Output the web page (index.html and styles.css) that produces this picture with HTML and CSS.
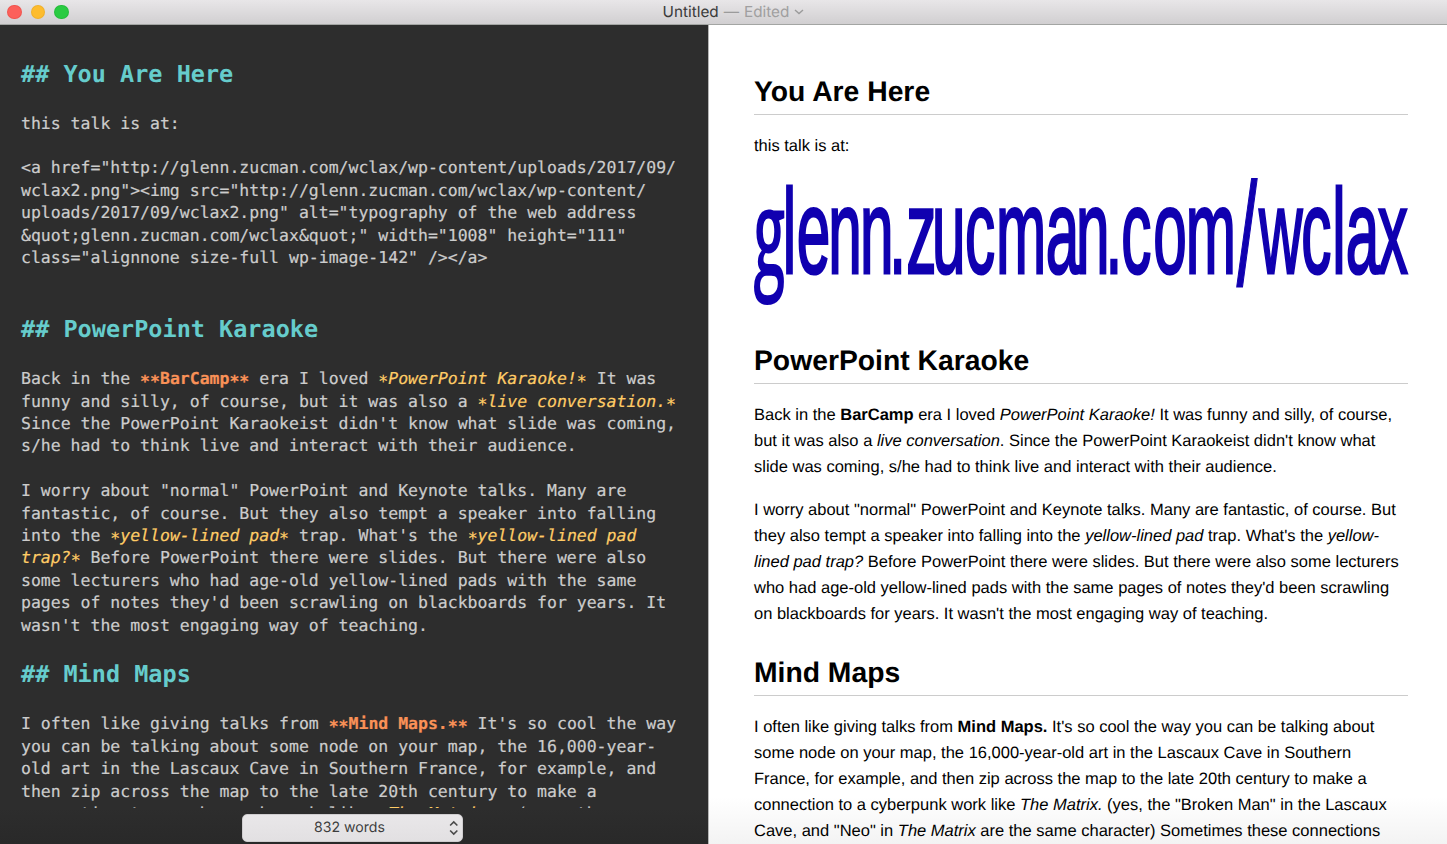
FILE: index.html
```
<!DOCTYPE html>
<html lang="en">
<head>
<meta charset="utf-8">
<title>Untitled</title>
<link rel="stylesheet" href="styles.css">
</head>
<body>
<div class="window">
<header class="titlebar">
  <div class="lights"><span class="light close"></span><span class="light minimize"></span><span class="light zoom"></span></div>
  <div class="title"><span class="name">Untitled</span><span class="dash">—</span><span class="edited">Edited</span><svg class="chevron" viewBox="0 0 10 6"><path d="M1 1l4 3.6L9 1"/></svg></div>
</header>
<div class="panes">
<section class="editor">
<div class="source">
<h2 class="src-head">## You Are Here</h2>
<p class="src">this talk is at:</p>
<p class="src">&lt;a href="http://glenn.zucman.com/wclax/wp-content/uploads/2017/09/
wclax2.png"&gt;&lt;img src="http://glenn.zucman.com/wclax/wp-content/
uploads/2017/09/wclax2.png" alt="typography of the web address
&amp;quot;glenn.zucman.com/wclax&amp;quot;" width="1008" height="111"
class="alignnone size-full wp-image-142" /&gt;&lt;/a&gt;</p>
<h2 class="src-head spaced">## PowerPoint Karaoke</h2>
<p class="src">Back in the <b><s>**</s>BarCamp<s>**</s></b> era I loved <i><s>*</s>PowerPoint Karaoke!<s>*</s></i> It was
funny and silly, of course, but it was also a <i><s>*</s>live conversation.<s>*</s></i>
Since the PowerPoint Karaokeist didn't know what slide was coming,
s/he had to think live and interact with their audience.</p>
<p class="src">I worry about "normal" PowerPoint and Keynote talks. Many are
fantastic, of course. But they also tempt a speaker into falling
into the <i><s>*</s>yellow-lined pad<s>*</s></i> trap. What's the <i><s>*</s>yellow-lined pad
trap?<s>*</s></i> Before PowerPoint there were slides. But there were also
some lecturers who had age-old yellow-lined pads with the same
pages of notes they'd been scrawling on blackboards for years. It
wasn't the most engaging way of teaching.</p>
<h2 class="src-head">## Mind Maps</h2>
<p class="src">I often like giving talks from <b><s>**</s>Mind Maps.<s>**</s></b> It's so cool the way
you can be talking about some node on your map, the 16,000-year-
old art in the Lascaux Cave in Southern France, for example, and
then zip across the map to the late 20th century to make a
connection to a cyberpunk work like <i><s>*</s>The Matrix.<s>*</s></i> (yes, the</p>
</div>
<footer class="status">
  <div class="counter"><span>832 words</span><svg class="stepper" viewBox="0 0 10 16"><path d="M1.2 5.4L5 1.6l3.8 3.8M1.2 10.6L5 14.4l3.8-3.8"/></svg></div>
</footer>
</section>
<article class="preview">
<h2>You Are Here</h2>
<p>this talk is at:</p>
<svg class="banner" viewBox="0 0 654 156">
  <text class="banner-g" transform="translate(-.5 117) scale(.44 .93)">g</text>
  <g transform="translate(0 113.5) scale(.475 .945)">
    <text class="banner-text" x="60.3 89.8 156.5 223.3 284.6 320.3 374.5 444 509.6 614.4 678 740 773.3 840.7 909">lenn.zucman.com</text>
    <text class="banner-slash" x="1016.2" y="13">/</text>
    <text class="banner-text" x="1063.2 1152.3 1217.4 1246 1313.4">wclax</text>
  </g>
</svg>
<h2>PowerPoint Karaoke</h2>
<p>Back in the <b>BarCamp</b> era I loved <i>PowerPoint Karaoke!</i> It was funny and silly, of course,<br>but it was also a <i>live conversation</i>. Since the PowerPoint Karaokeist didn't know what<br>slide was coming, s/he had to think live and interact with their audience.</p>
<p>I worry about "normal" PowerPoint and Keynote talks. Many are fantastic, of course. But<br>they also tempt a speaker into falling into the <i>yellow-lined pad</i> trap. What's the <i>yellow-<br>lined pad trap?</i> Before PowerPoint there were slides. But there were also some lecturers<br>who had age-old yellow-lined pads with the same pages of notes they'd been scrawling<br>on blackboards for years. It wasn't the most engaging way of teaching.</p>
<h2>Mind Maps</h2>
<p>I often like giving talks from <b>Mind Maps.</b> It's so cool the way you can be talking about<br>some node on your map, the 16,000-year-old art in the Lascaux Cave in Southern<br>France, for example, and then zip across the map to the late 20th century to make a<br>connection to a cyberpunk work like <i>The Matrix.</i> (yes, the "Broken Man" in the Lascaux<br>Cave, and "Neo" in <i>The Matrix</i> are the same character) Sometimes these connections</p>
</article>
</div>
</div>
</body>
</html>
```
FILE: styles.css
```
* { box-sizing: border-box; }
body { margin: 0; overflow: hidden; text-rendering: geometricPrecision; }
h2, p { margin: 0; }
.window { width: 1447px; height: 844px; display: flex; flex-direction: column; }

.titlebar {
  height: 25px; flex: none; display: grid; grid-template-columns: 1fr auto 1fr; align-items: center;
  background: linear-gradient(#e8e6e8, #d1cfd1); border-bottom: 1px solid #a3a5a3;
}
.lights { display: flex; gap: 9px; padding-left: 7px; }
.light { width: 14.5px; height: 14.5px; border-radius: 50%; border: 1px solid #e0443e66; }
.close { background: #fc605b; }
.minimize { background: #fdbc2e; border-color: #dfa12366; }
.zoom { background: #2acb42; border-color: #1ea83366; }
.title { display: flex; align-items: center; padding-left: 20px; font: 15.3px/24px Inter, sans-serif; color: #3a3a3a; }
.dash { margin: 0 5px 0 5px; color: #9b9b9b; }
.edited { color: #a09fa0; }
.chevron { width: 10px; height: 6px; margin-left: 5px; fill: none; stroke: #9b9b9b; stroke-width: 1.4; }

.panes { flex: 1; min-height: 0; display: grid; grid-template-columns: 709px 1fr; }
.editor {
  background: #2d2d2d; border-right: 1px solid #b5b5b5; min-height: 0;
  display: flex; flex-direction: column; font-family: "DejaVu Sans Mono", monospace;
}
.source { height: 783px; overflow: hidden; padding: 33.5px 0 0 21px; }
.src, .src-head { white-space: pre; }
.src { font-size: 16.49px; line-height: 22.4px; color: #cccccc; margin-bottom: 22.4px; -webkit-text-stroke: .2px; }
.src-head { font-size: 23.5px; line-height: 31px; color: #66cccc; margin-bottom: 23px; }
.spaced { margin-top: 44.8px; }
.src b { color: #f99157; }
.src i { color: #ffcc66; }
/* Asterisks sit on the middle of the x-height. */
.src s { text-decoration: none; line-height: 0; vertical-align: -.19em; }
.status { flex: 1; display: flex; justify-content: center; padding-top: 6px; background: linear-gradient(#2d2d2d, #292929); }
.counter {
  width: 221px; height: 28px; margin-right: 3px; border-radius: 5px; border: 1px solid #cfcdcf;
  background: linear-gradient(#e9e7e9, #e2e0e2); display: flex; align-items: center; justify-content: space-between;
  padding: 0 4px 0 71px; font: 14.1px/26px Inter, sans-serif; color: #3d3d3d;
}
.stepper { width: 9.5px; height: 16px; fill: none; stroke: #4a4a4a; stroke-width: 1.7; }

.preview {
  padding: 49px 39px 0 45px; overflow: hidden; color: #000;
  background: linear-gradient(#fff 772px, #f3f3f3); font: 16.5px/26px "Liberation Sans", Arial, sans-serif;
}
.preview p { white-space: nowrap; margin-bottom: 17.5px; }
.preview h2 { font-size: 28.3px; line-height: 34px; padding-bottom: 6px; border-bottom: 1px solid #ccc; margin-bottom: 18px; }
.preview p + h2 { margin-top: 27.5px; }
.banner { display: block; width: 654px; height: 156px; margin: -17.5px 0 27.6px; overflow: visible; fill: #1000b0; }
.banner-g { font: 600 130px "Open Sans", sans-serif; }
.banner-text { font: 127px "Liberation Sans", Arial, sans-serif; stroke: #1000b0; stroke-width: 3; }
.banner-slash { font: 155px "Liberation Sans", Arial, sans-serif; stroke: #1000b0; stroke-width: 2; }
```
